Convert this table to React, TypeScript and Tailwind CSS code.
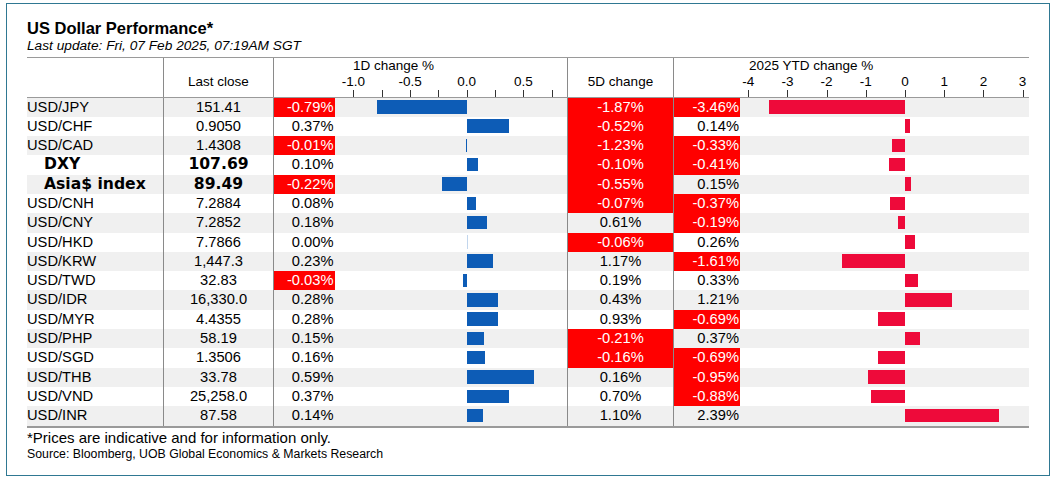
import React from "react";

type Row = {
    label: string;
    close: string;
    d1: number;
    d5: number;
    ytd: number;
    bold?: boolean;
};

const rows: Row[] = [
    { label: "USD/JPY", close: "151.41", d1: -0.79, d5: -1.87, ytd: -3.46 },
    { label: "USD/CHF", close: "0.9050", d1: 0.37, d5: -0.52, ytd: 0.14 },
    { label: "USD/CAD", close: "1.4308", d1: -0.01, d5: -1.23, ytd: -0.33 },
    { label: "DXY", close: "107.69", d1: 0.1, d5: -0.1, ytd: -0.41, bold: true },
    { label: "Asia$ index", close: "89.49", d1: -0.22, d5: -0.55, ytd: 0.15, bold: true },
    { label: "USD/CNH", close: "7.2884", d1: 0.08, d5: -0.07, ytd: -0.37 },
    { label: "USD/CNY", close: "7.2852", d1: 0.18, d5: 0.61, ytd: -0.19 },
    { label: "USD/HKD", close: "7.7866", d1: 0.0, d5: -0.06, ytd: 0.26 },
    { label: "USD/KRW", close: "1,447.3", d1: 0.23, d5: 1.17, ytd: -1.61 },
    { label: "USD/TWD", close: "32.83", d1: -0.03, d5: 0.19, ytd: 0.33 },
    { label: "USD/IDR", close: "16,330.0", d1: 0.28, d5: 0.43, ytd: 1.21 },
    { label: "USD/MYR", close: "4.4355", d1: 0.28, d5: 0.93, ytd: -0.69 },
    { label: "USD/PHP", close: "58.19", d1: 0.15, d5: -0.21, ytd: 0.37 },
    { label: "USD/SGD", close: "1.3506", d1: 0.16, d5: -0.16, ytd: -0.69 },
    { label: "USD/THB", close: "33.78", d1: 0.59, d5: 0.16, ytd: -0.95 },
    { label: "USD/VND", close: "25,258.0", d1: 0.37, d5: 0.7, ytd: -0.88 },
    { label: "USD/INR", close: "87.58", d1: 0.14, d5: 1.1, ytd: 2.39 },
];

// chart scales (px per 1%)
const D1_ZERO = 131.7;
const D1_SCALE = 113.3;
const YTD_ZERO = 165;
const YTD_SCALE = 39.2;

const d1Ticks = [-1, -0.75, -0.5, -0.25, 0, 0.25, 0.5, 0.75];
const d1Labels = ["-1.0", "-0.5", "0.0", "0.5"];
const ytdTicks = [-4, -3, -2, -1, 0, 1, 2, 3];

const fmt = (v: number) => `${v.toFixed(2)}%`;

function Bar({
    value,
    zero,
    scale,
    color,
}: {
    value: number;
    zero: number;
    scale: number;
    color: string;
}) {
    const w = Math.max(Math.abs(value) * scale, 1);
    const left = value < 0 ? zero - w : zero;

    return (
        <div
            className={`absolute top-[2.6px] h-[13.5px] ${color}`}
            style={{ left, width: w, opacity: value === 0 ? 0.25 : 1 }}
        />
    );
}

function DataRow({ row, index }: { row: Row; index: number }) {
    const stripe = index % 2 === 0 ? "bg-[#f0f0f0]" : "bg-white";

    return (
        <div
            className={`grid grid-cols-[136px_110px_62px_232px_106px_67px_288px] h-[19.3px] text-[14.7px] leading-[19.3px] ${stripe}`}
        >
            {row.bold ? (
                <div className="pl-[17px] font-['DejaVu_Sans',sans-serif] font-bold text-[15.6px]">
                    {row.label}
                </div>
            ) : (
                <div>{row.label}</div>
            )}

            <div
                className={
                    row.bold
                        ? "border-l border-[#8a8a8a] text-center font-['DejaVu_Sans',sans-serif] font-bold text-[15.6px]"
                        : "border-l border-[#8a8a8a] text-center"
                }
            >
                {row.close}
            </div>

            <div
                className={
                    row.d1 < 0
                        ? "border-l border-[#8a8a8a] bg-[#ff0000] text-white text-right pr-[1.5px]"
                        : "border-l border-[#8a8a8a] text-right pr-[1.5px]"
                }
            >
                {fmt(row.d1)}
            </div>

            <div className="relative">
                <Bar value={row.d1} zero={D1_ZERO} scale={D1_SCALE} color="bg-[#0d5cb6]" />
            </div>

            <div
                className={
                    row.d5 < 0
                        ? "border-l border-[#8a8a8a] bg-[#ff0000] text-white text-center"
                        : "border-l border-[#8a8a8a] text-center"
                }
            >
                {fmt(row.d5)}
            </div>

            <div
                className={
                    row.ytd < 0
                        ? "border-l border-[#8a8a8a] bg-[#ff0000] text-white text-right pr-[1px]"
                        : "border-l border-[#8a8a8a] text-right pr-[1px]"
                }
            >
                {fmt(row.ytd)}
            </div>

            <div className="relative">
                <Bar value={row.ytd} zero={YTD_ZERO} scale={YTD_SCALE} color="bg-[#ee0a3a]" />
            </div>
        </div>
    );
}

const App = () => {
    return (
        <div className="w-[1055px] h-[481px] bg-white pt-[3px] pl-[6px] font-['Liberation_Sans',Arial,sans-serif] text-black">
            <div className="w-[1044px] h-[473px] border border-[#2f7892] px-[20px] pt-[15px]">
                <h1 className="text-[16.5px] leading-[19px] font-bold">
                    US Dollar Performance*
                </h1>
                <p className="text-[13.7px] leading-[15px] italic">
                    Last update: Fri, 07 Feb 2025, 07:19AM SGT
                </p>

                <div className="mt-[3.5px] border-t border-b-2 border-[#9a9a9a]">
                    {/* header */}
                    <div className="grid grid-cols-[136px_110px_294px_106px_355px] h-[40px] border-b border-[#9a9a9a] text-[13.5px] leading-[16px]">
                        <div />
                        <div className="border-l border-[#8a8a8a] text-center pt-[16px]">
                            Last close
                        </div>

                        <div className="relative border-l border-[#8a8a8a]">
                            <div className="absolute left-[79px] top-0">1D change %</div>
                            {d1Labels.map((l, i) => (
                                <div
                                    key={l}
                                    className="absolute top-[16px] -translate-x-1/2"
                                    style={{ left: 62 + D1_ZERO + (i * 0.5 - 1) * D1_SCALE - 1 }}
                                >
                                    {l}
                                </div>
                            ))}
                            {d1Ticks.map((t) => (
                                <div
                                    key={t}
                                    className="absolute top-[32px] h-[7px] w-px bg-[#333]"
                                    style={{ left: 62 + D1_ZERO + t * D1_SCALE - 1 }}
                                />
                            ))}
                        </div>

                        <div className="border-l border-[#8a8a8a] text-center pt-[16px]">
                            5D change
                        </div>

                        <div className="relative border-l border-[#8a8a8a]">
                            <div className="absolute left-[75px] top-0">2025 YTD change %</div>
                            {ytdTicks.map((t) => (
                                <div
                                    key={t}
                                    className="absolute top-[16px] -translate-x-1/2"
                                    style={{ left: 67 + YTD_ZERO + t * YTD_SCALE - 1 }}
                                >
                                    {t}
                                </div>
                            ))}
                            {ytdTicks.map((t) => (
                                <div
                                    key={t}
                                    className="absolute top-[32px] h-[7px] w-px bg-[#333]"
                                    style={{ left: 67 + YTD_ZERO + t * YTD_SCALE - 1 }}
                                />
                            ))}
                        </div>
                    </div>

                    {rows.map((row, i) => (
                        <DataRow key={row.label} row={row} index={i} />
                    ))}
                </div>

                <p className="text-[15px] leading-[17px] mt-px">
                    *Prices are indicative and for information only.
                </p>
                <p className="text-[12.3px] leading-[15px] mt-[1.5px]">
                    Source: Bloomberg, UOB Global Economics &amp; Markets Research
                </p>
            </div>
        </div>
    );
};

export default App;
